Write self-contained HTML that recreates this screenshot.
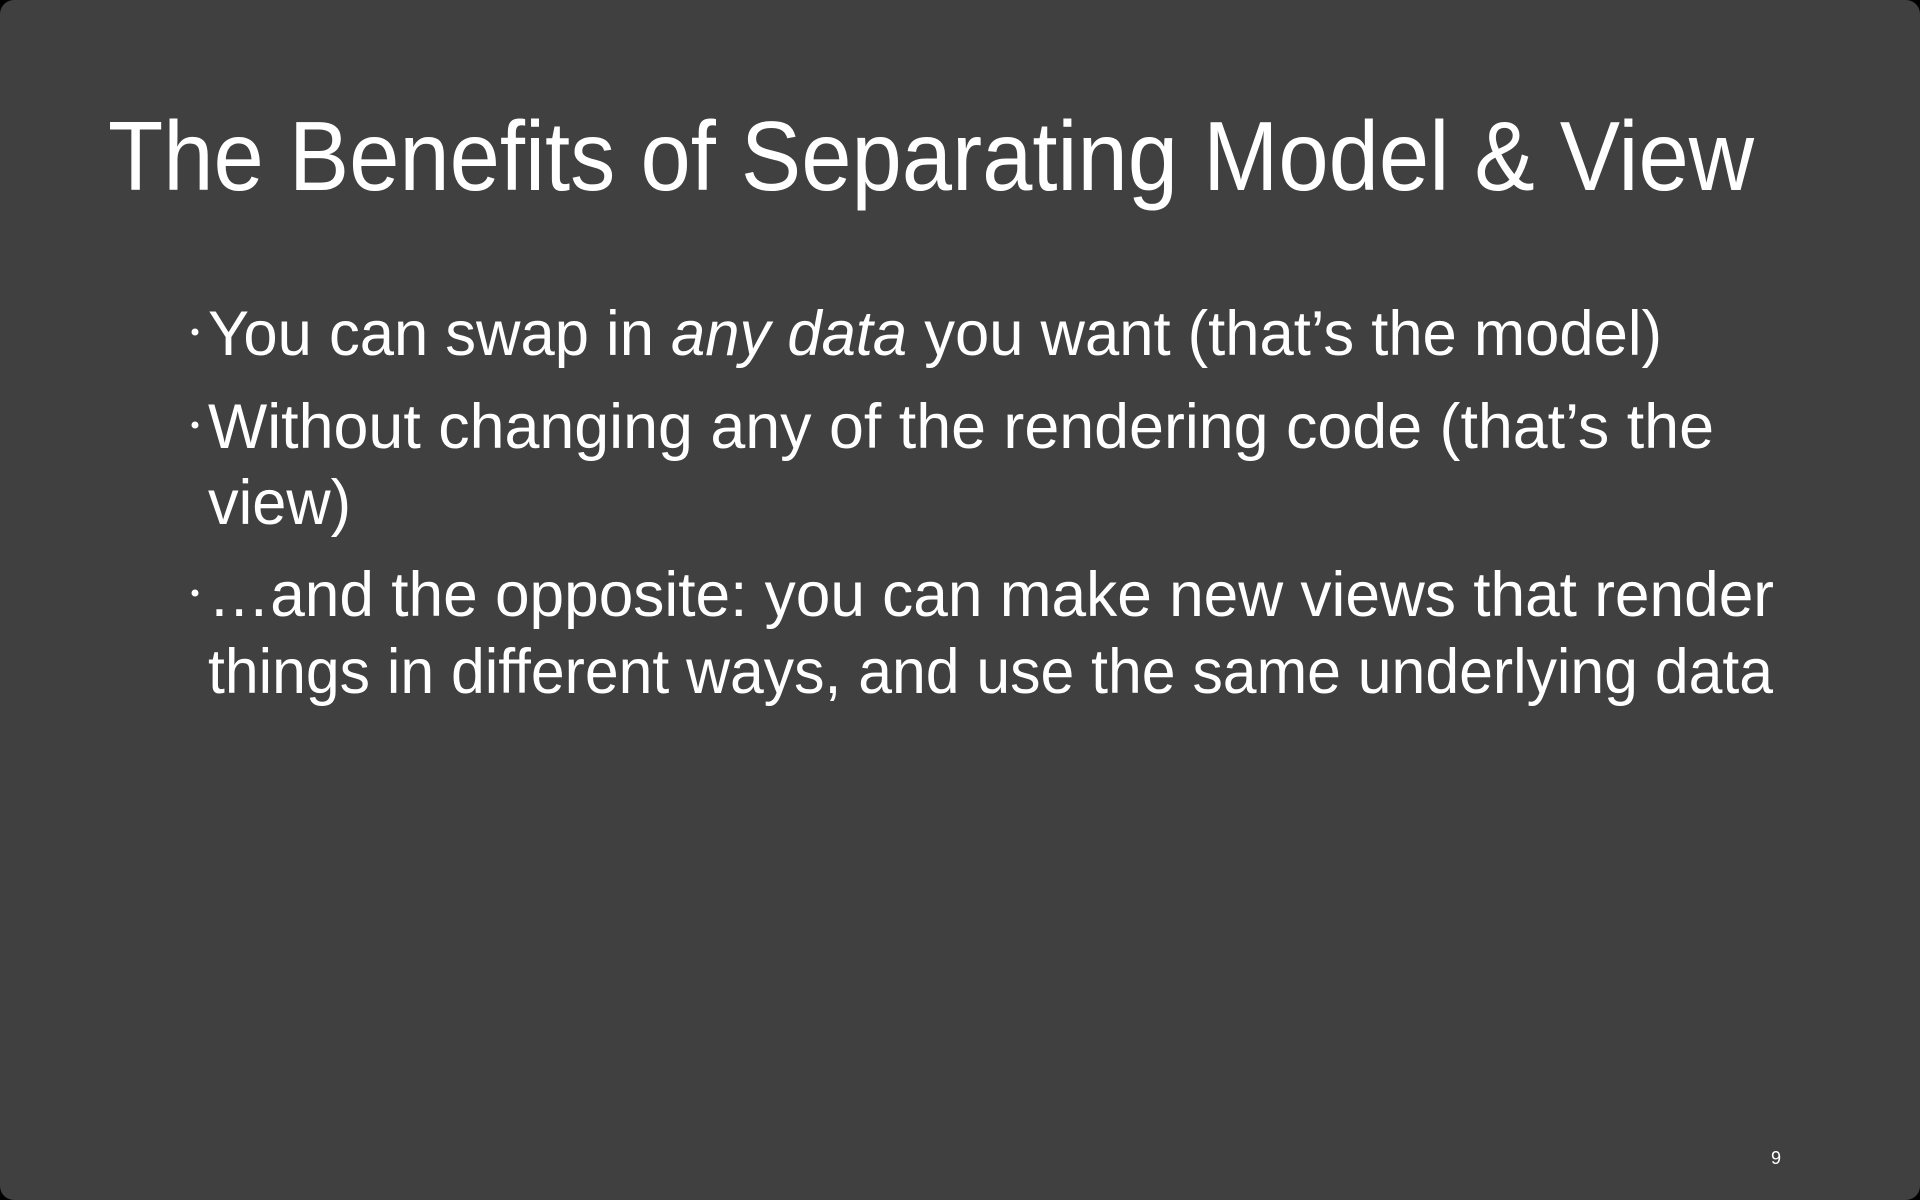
<!DOCTYPE html>
<html><head><meta charset="utf-8"><style>
html,body{margin:0;padding:0;background:#000;}
.s{position:absolute;left:0;top:0;width:1920px;height:1200px;background:#404040;border-radius:14px;overflow:hidden}
svg{position:absolute;left:0;top:0}
text{font-family:"Liberation Sans",sans-serif;fill:#fff}
</style></head><body><div class="s">
<svg width="1920" height="1200" viewBox="0 0 1920 1200">
<text x="108" y="190" font-size="98" textLength="1646" lengthAdjust="spacingAndGlyphs">The Benefits of Separating Model &amp; View</text>
<g font-size="63">
<circle cx="195" cy="332" r="3.5" fill="#fff"/>
<text x="208" y="355" textLength="1454" lengthAdjust="spacingAndGlyphs">You can swap in <tspan font-style="italic">any data</tspan> you want (that’s the model)</text>
<circle cx="195" cy="425" r="3.5" fill="#fff"/>
<text x="208" y="448" textLength="1506" lengthAdjust="spacingAndGlyphs">Without changing any of the rendering code (that’s the</text>
<text x="208" y="524" textLength="143" lengthAdjust="spacingAndGlyphs">view)</text>
<circle cx="195" cy="593" r="3.5" fill="#fff"/>
<text x="208" y="616" textLength="1566" lengthAdjust="spacingAndGlyphs">…and the opposite: you can make new views that render</text>
<text x="208" y="693" textLength="1565" lengthAdjust="spacingAndGlyphs">things in different ways, and use the same underlying data</text>
</g>
<text x="1771" y="1164" font-size="18">9</text>
</svg>
</div></body></html>
